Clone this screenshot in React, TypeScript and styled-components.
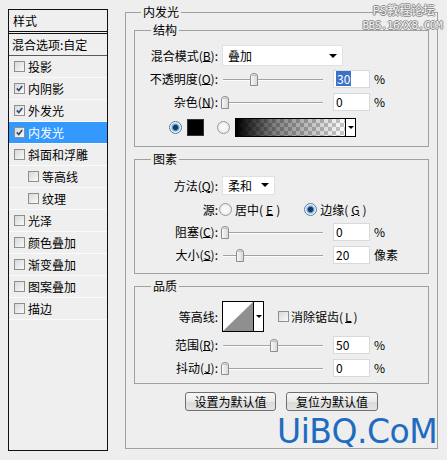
import React from "react";
import styled, { createGlobalStyle } from "styled-components";

const Global = createGlobalStyle`
  html, body { margin: 0; padding: 0; background: #eeeeee; }
  body {
    font-family: "Noto Sans CJK SC", "Noto Sans", sans-serif;
    font-size: 12px;
    color: #000;
  }
  #root { width: 447px; height: 460px; }
  u { text-decoration-thickness: 1px; text-underline-offset: 0px; }
`;

const Page = styled.div`
  position: relative;
  width: 447px;
  height: 460px;
  box-sizing: border-box;
  padding-left: 8px;
  display: flex;
  align-items: flex-start;
  overflow: hidden;
  background: #eeeeee;
`;

/* ---------- left list ---------- */
const StyleList = styled.div`
  margin-top: 9px;
  width: 100px;
  height: 442px;
  box-sizing: border-box;
  border: 1px solid #111;
  background: #efefef;
  display: flex;
  flex-direction: column;
`;

const ListHeader = styled.div`
  height: 21px;
  line-height: 21px;
  padding-left: 4px;
  border-bottom: 3px double #111;
`;

const BlendRow = styled.div`
  height: 21px;
  line-height: 21px;
  padding-left: 3px;
  border-bottom: 1px solid #5a5a5a;
`;

const EffectRow = styled.div<{ $level: number; $selected?: boolean }>`
  height: 21px;
  display: flex;
  align-items: center;
  gap: 3px;
  padding-left: ${(p) => (p.$level === 2 ? 19 : 5)}px;
  border-bottom: 1px solid #fbfbfb;
  background: ${(p) => (p.$selected ? "#3399ff" : "transparent")};
  color: ${(p) => (p.$selected ? "#fff" : "#000")};
  white-space: nowrap;
`;

const CheckBox = styled.span`
  flex: none;
  width: 11px;
  height: 11px;
  box-sizing: border-box;
  border: 1px solid #8e8f8f;
  background: linear-gradient(135deg, #d9d9d9, #f9f9f9);
  display: flex;
  align-items: center;
  justify-content: center;
`;

const Check = ({ on }: { on?: boolean }) => (
  <CheckBox>
    {on && (
      <svg width="7" height="7" viewBox="0 0 7 7">
        <path d="M0.8 3.4 L2.8 5.6 L6.2 1" fill="none" stroke="#2c4a6e" strokeWidth="1.6" />
      </svg>
    )}
  </CheckBox>
);

/* ---------- right dialog ---------- */
const Dialog = styled.div`
  margin-left: 17px;
  margin-top: 4px;
`;

const OuterGroup = styled.fieldset`
  width: 313px;
  box-sizing: border-box;
  margin: 0;
  padding: 0 8px 37px;
  border: 1px solid #a0a0a0;
  min-width: 0;
`;

const Legend = styled.legend<{ $offset: number }>`
  margin-left: ${(p) => p.$offset}px;
  padding: 0 2px;
  font-size: 12px;
  line-height: 16px;
  height: 16px;
`;

const Group = styled.fieldset<{ $mt: number }>`
  margin: ${(p) => p.$mt}px 0 0;
  padding: 0;
  border: 1px solid #a0a0a0;
  min-width: 0;
`;

const GroupBody = styled.div<{ $pt: number; $pb: number }>`
  display: flex;
  flex-direction: column;
  padding: ${(p) => p.$pt}px 0 ${(p) => p.$pb}px;
`;

const FormRow = styled.div<{ $h: number; $indent?: number }>`
  height: ${(p) => p.$h}px;
  display: flex;
  align-items: center;
  padding-left: ${(p) => p.$indent ?? 0}px;
  white-space: nowrap;
`;

const Label = styled.span<{ $gap?: number }>`
  flex: none;
  width: 83px;
  margin-right: ${(p) => p.$gap ?? 4}px;
  text-align: right;
`;

const Select = styled.div<{ $w: number; $h: number }>`
  flex: none;
  width: ${(p) => p.$w}px;
  height: ${(p) => p.$h}px;
  box-sizing: border-box;
  background: #fff;
  border: 1px solid #e0e0e0;
  display: flex;
  align-items: center;
  justify-content: space-between;
  padding: 0 5px;
`;

const Caret = styled.span<{ $size?: number }>`
  width: 0;
  height: 0;
  border-left: ${(p) => p.$size ?? 4}px solid transparent;
  border-right: ${(p) => p.$size ?? 4}px solid transparent;
  border-top: ${(p) => p.$size ?? 4}px solid #000;
`;

const Track = styled.div`
  position: relative;
  flex: none;
  width: 104px;
  height: 14px;
  &::before {
    content: "";
    position: absolute;
    left: 1px;
    right: 3px;
    top: 7px;
    height: 1px;
    background: #a3a3a3;
    box-shadow: 0 1px 0 #fdfdfd;
  }
`;

const Thumb = styled.svg`
  position: absolute;
  top: 1px;
  margin-left: -4px;
`;

const Slider = ({ pos }: { pos: number }) => (
  <Track>
    <Thumb width="8" height="13" viewBox="0 0 8 13" style={{ left: `${3 + pos * 98}px` }}>
      <defs>
        <linearGradient id="tg" x1="0" y1="0" x2="1" y2="0">
          <stop offset="0" stopColor="#fafafa" />
          <stop offset="1" stopColor="#d6d6d6" />
        </linearGradient>
      </defs>
      <path d="M0.5 12.5 L0.5 3 Q0.5 0.5 4 0.5 Q7.5 0.5 7.5 3 L7.5 12.5 Z" fill="url(#tg)" stroke="#8d8d8d" />
      <path d="M2 2.5 L6 2.5" stroke="#bdbdbd" />
    </Thumb>
  </Track>
);

const NumField = styled.div`
  flex: none;
  margin-left: 7px;
  width: 37px;
  height: 18px;
  box-sizing: border-box;
  background: #fff;
  border: 1px solid #d6dade;
  padding-left: 2px;
  display: flex;
  align-items: center;
  line-height: 15px;
`;

const Selected = styled.span`
  background: #3a73c6;
  color: #fff;
  padding: 0 1px;
`;

const Unit = styled.span`
  margin-left: 4px;
`;

const RadioDot = styled.span<{ $on?: boolean }>`
  flex: none;
  width: 13px;
  height: 13px;
  box-sizing: border-box;
  border-radius: 50%;
  border: 1px solid ${(p) => (p.$on ? "#5b7d9c" : "#9a9a9a")};
  background: ${(p) =>
    p.$on
      ? "radial-gradient(circle, #123a66 0 2.2px, #3d78b0 2.6px, #b9d6ef 4.2px, #eef5fb 5px)"
      : "radial-gradient(circle, #f8f8f8 0 3px, #e3e3e3 6px)"};
`;

const RadioOption = styled.span<{ $ml?: number }>`
  display: flex;
  align-items: center;
  gap: 3px;
  margin-left: ${(p) => p.$ml ?? 0}px;
`;

const Swatch = styled.span`
  flex: none;
  width: 17px;
  height: 17px;
  box-sizing: border-box;
  border: 1px solid #333;
  background: #000;
  margin-left: 5px;
`;

const GradientBox = styled.div`
  flex: none;
  margin-left: 5px;
  width: 121px;
  height: 19px;
  box-sizing: border-box;
  border: 1px solid #000;
  display: flex;
`;

const GradientFill = styled.div`
  flex: 1;
  background: linear-gradient(to right, #000 0%, rgba(0, 0, 0, 0.5) 35%, rgba(0, 0, 0, 0) 100%),
    repeating-conic-gradient(#c8c8c8 0 25%, #ffffff 0 50%) 0 0 / 8px 8px;
`;

const DropPart = styled.div`
  flex: none;
  width: 9px;
  border-left: 1px solid #000;
  background: #fff;
  display: flex;
  align-items: center;
  justify-content: center;
`;

const ContourBox = styled.div`
  flex: none;
  width: 42px;
  height: 31px;
  box-sizing: border-box;
  border: 1px solid #000;
  display: flex;
  background: #fff;
`;

const ContourPreview = styled.svg`
  flex: none;
  display: block;
`;

const CheckLabel = styled.span`
  display: flex;
  align-items: center;
  gap: 2px;
  margin-left: 14px;
`;

const ButtonRow = styled.div`
  display: flex;
  justify-content: center;
  gap: 10px;
  margin-top: 8px;
`;

const Button = styled.button<{ $w: number }>`
  width: ${(p) => p.$w}px;
  height: 19px;
  padding: 0;
  font-family: inherit;
  font-size: 12px;
  line-height: 17px;
  color: #000;
  border: 1px solid #707070;
  border-radius: 3px;
  background: linear-gradient(#f7f7f7, #e9e9e9 50%, #d9d9d9 51%, #e4e4e4);
`;

const TopMark = styled.div`
  position: absolute;
  top: 2px;
  right: 5px;
  display: flex;
  flex-direction: column;
  align-items: flex-end;
  gap: 3px;
  color: #f2f2f2;
  text-shadow: 1px 0 #8c8c8c, -1px 0 #8c8c8c, 0 1px #8c8c8c, 0 -1px #8c8c8c;
`;

const TopMarkLine = styled.span<{ $mono?: boolean }>`
  display: block;
  font-family: ${(p) => (p.$mono ? '"DejaVu Sans Mono", monospace' : '"Noto Sans CJK SC", sans-serif')};
  font-size: ${(p) => (p.$mono ? 11 : 12)}px;
  line-height: ${(p) => (p.$mono ? 12 : 15)}px;
  letter-spacing: ${(p) => (p.$mono ? "-0.5px" : "0")};
  margin-right: ${(p) => (p.$mono ? 0 : 7)}px;
`;

const BigMark = styled.div`
  position: absolute;
  left: 277px;
  top: 412px;
  font-family: "DejaVu Sans", Verdana, sans-serif;
  font-size: 33px;
  line-height: 40px;
  letter-spacing: -0.5px;
  color: #1d6cc1;
`;

const effects: { name: string; level: number; on?: boolean; selected?: boolean }[] = [
  { name: "投影", level: 1 },
  { name: "内阴影", level: 1, on: true },
  { name: "外发光", level: 1, on: true },
  { name: "内发光", level: 1, on: true, selected: true },
  { name: "斜面和浮雕", level: 1 },
  { name: "等高线", level: 2 },
  { name: "纹理", level: 2 },
  { name: "光泽", level: 1 },
  { name: "颜色叠加", level: 1 },
  { name: "渐变叠加", level: 1 },
  { name: "图案叠加", level: 1 },
  { name: "描边", level: 1 },
];

export default function App() {
  return (
    <>
      <Global />
      <Page>
        <StyleList>
          <ListHeader>样式</ListHeader>
          <BlendRow>混合选项:自定</BlendRow>
          {effects.map((e) => (
            <EffectRow key={e.name} $level={e.level} $selected={e.selected}>
              <Check on={e.on} />
              {e.name}
            </EffectRow>
          ))}
        </StyleList>

        <Dialog>
          <OuterGroup>
            <Legend $offset={7}>内发光</Legend>

            <Group $mt={2}>
              <Legend $offset={16}>结构</Legend>
              <GroupBody $pt={6} $pb={5}>
                <FormRow $h={23}>
                  <Label>混合模式(<u>B</u>):</Label>
                  <Select $w={121} $h={21}>
                    叠加
                    <Caret />
                  </Select>
                </FormRow>
                <FormRow $h={23}>
                  <Label>不透明度(<u>O</u>):</Label>
                  <Slider pos={0.3} />
                  <NumField>
                    <Selected>30</Selected>
                  </NumField>
                  <Unit>%</Unit>
                </FormRow>
                <FormRow $h={23}>
                  <Label>杂色(<u>N</u>):</Label>
                  <Slider pos={0} />
                  <NumField>0</NumField>
                  <Unit>%</Unit>
                </FormRow>
                <FormRow $h={28} $indent={34}>
                  <RadioDot $on />
                  <Swatch />
                  <RadioOption $ml={13}>
                    <RadioDot />
                  </RadioOption>
                  <GradientBox>
                    <GradientFill />
                    <DropPart>
                      <Caret $size={3} />
                    </DropPart>
                  </GradientBox>
                </FormRow>
              </GroupBody>
            </Group>

            <Group $mt={4}>
              <Legend $offset={16}>图素</Legend>
              <GroupBody $pt={5} $pb={7}>
                <FormRow $h={26}>
                  <Label>方法(<u>Q</u>):</Label>
                  <Select $w={53} $h={19}>
                    柔和
                    <Caret />
                  </Select>
                </FormRow>
                <FormRow $h={22}>
                  <Label $gap={1}>源:</Label>
                  <RadioOption>
                    <RadioDot />
                    居中(<u>E</u>)
                  </RadioOption>
                  <RadioOption $ml={24}>
                    <RadioDot $on />
                    边缘(<u>G</u>)
                  </RadioOption>
                </FormRow>
                <FormRow $h={23}>
                  <Label>阻塞(<u>C</u>):</Label>
                  <Slider pos={0} />
                  <NumField>0</NumField>
                  <Unit>%</Unit>
                </FormRow>
                <FormRow $h={23}>
                  <Label>大小(<u>S</u>):</Label>
                  <Slider pos={0.155} />
                  <NumField>20</NumField>
                  <Unit>像素</Unit>
                </FormRow>
              </GroupBody>
            </Group>

            <Group $mt={4}>
              <Legend $offset={16}>品质</Legend>
              <GroupBody $pt={6} $pb={4}>
                <FormRow $h={33}>
                  <Label>等高线:</Label>
                  <ContourBox>
                    <ContourPreview width="30" height="29" viewBox="0 0 30 29">
                      <rect width="30" height="29" fill="#fff" />
                      <polygon points="0,29 30,0 30,29" fill="#8f8f8f" />
                    </ContourPreview>
                    <DropPart>
                      <Caret $size={3} />
                    </DropPart>
                  </ContourBox>
                  <CheckLabel>
                    <Check />
                    消除锯齿(<u>L</u>)
                  </CheckLabel>
                </FormRow>
                <FormRow $h={23}>
                  <Label>范围(<u>R</u>):</Label>
                  <Slider pos={0.5} />
                  <NumField>50</NumField>
                  <Unit>%</Unit>
                </FormRow>
                <FormRow $h={23}>
                  <Label>抖动(<u>J</u>):</Label>
                  <Slider pos={0} />
                  <NumField>0</NumField>
                  <Unit>%</Unit>
                </FormRow>
              </GroupBody>
            </Group>

            <ButtonRow>
              <Button $w={91}>设置为默认值</Button>
              <Button $w={92}>复位为默认值</Button>
            </ButtonRow>
          </OuterGroup>
        </Dialog>

        <TopMark>
          <TopMarkLine>PS教程论坛</TopMarkLine>
          <TopMarkLine $mono>BBS.16XX8.COM</TopMarkLine>
        </TopMark>
        <BigMark>UiBQ.CoM</BigMark>
      </Page>
    </>
  );
}
